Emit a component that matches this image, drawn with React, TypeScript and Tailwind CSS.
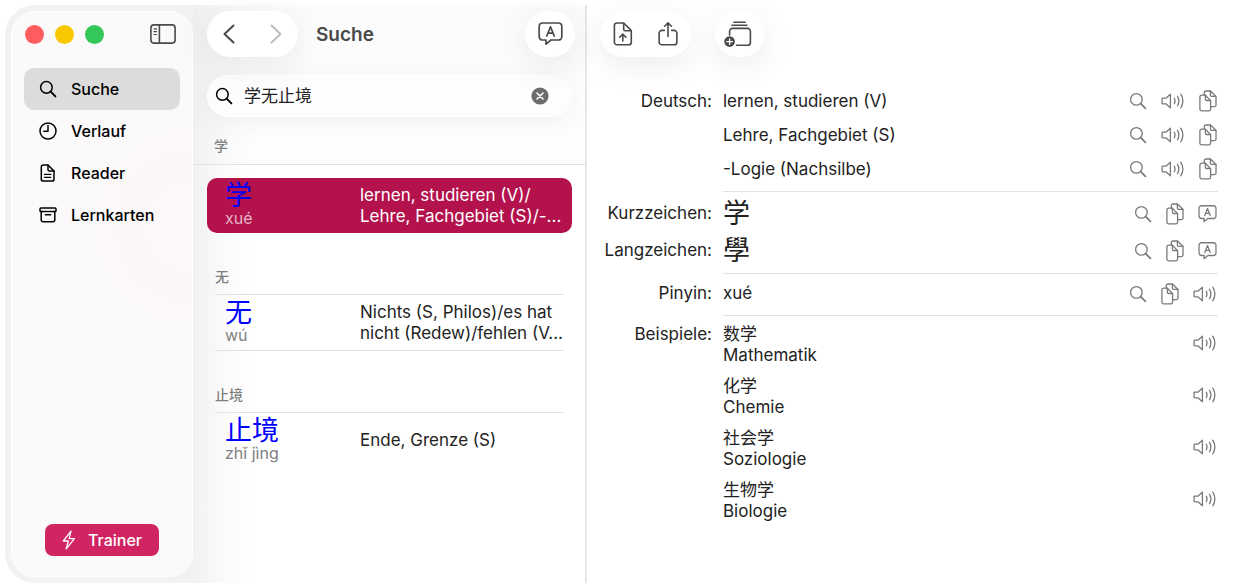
import { useState } from "react";
import type { ReactNode } from "react";

type IconProps = { className?: string };

function Svg({ w, h, sw, className, children }: { w: number; h: number; sw: number; className?: string; children: ReactNode }) {
  return (
    <svg
      width={w}
      height={h}
      viewBox={`0 0 ${w} ${h}`}
      fill="none"
      stroke="currentColor"
      strokeWidth={sw}
      strokeLinecap="round"
      strokeLinejoin="round"
      aria-hidden="true"
      className={className}
    >
      {children}
    </svg>
  );
}

function MagnifierIcon({ bold }: { bold?: boolean }) {
  return (
    <Svg w={18} h={18} sw={bold ? 1.5 : 1.3}>
      <circle cx="7.4" cy="7.4" r="5.8" />
      <path d="M11.7 11.7 16.400 16.400" strokeWidth={bold ? 1.9 : 1.7} />
    </Svg>
  );
}

function ClockIcon() {
  return (
    <Svg w={18} h={18} sw={1.5}>
      <circle cx="9" cy="9" r="8" />
      <path d="M9 3.6V9.2H4.8" />
    </Svg>
  );
}

function DocTextIcon() {
  return (
    <Svg w={18} h={18} sw={1.5}>
      <path d="M4.2 1H9l6 6v8.2a1.9 1.9 0 0 1-1.9 1.9H4.2a1.9 1.9 0 0 1-1.9-1.9V2.9A1.9 1.9 0 0 1 4.2 1Z" />
      <path d="M9 1.2v4.4A1.3 1.3 0 0 0 10.300 7H15" />
      <path d="M5.500 10.400h6.300M5.500 13.300h6.300" strokeWidth="1.300" />
    </Svg>
  );
}

function ArchiveIcon() {
  return (
    <Svg w={18} h={18} sw={1.5}>
      <rect x="1" y="2" width="16" height="3.600" rx="0.900" />
      <path d="M2.200 5.600v8.200a2 2 0 0 0 2 2h9.600a2 2 0 0 0 2-2V5.600M6.300 8.700h5.400" />
    </Svg>
  );
}

function BoltIcon() {
  return (
    <Svg w={14} h={20} sw={1.3}>
      <path d="M9 1.200 1.300 11h5L4.200 18.800 12.400 8.600H7.200Z" />
    </Svg>
  );
}

function SidebarIcon() {
  return (
    <Svg w={26} h={20} sw={1.6}>
      <rect x="0.900" y="0.900" width="24.200" height="18.200" rx="3" />
      <path d="M9.400 1v18" />
      <path d="M4 4.900h2.500M4 7.700h2.500M4 10.500h2.500" strokeWidth="1.200" />
    </Svg>
  );
}

function SpeakerIcon() {
  return (
    <Svg w={24} h={18} sw={1.3}>
      <path d="M1.700 6.200h3.200L9.400 2.200v13.600L4.900 11.800H1.700a.6.6 0 0 1-.6-.6V6.800a.6.6 0 0 1 .6-.6Z" />
      <path d="M13.300 6.300a5.800 5.800 0 0 1 0 5.400M16.500 4.300a9.400 9.400 0 0 1 0 9.400M19.800 2.200a13 13 0 0 1 0 13.600" />
    </Svg>
  );
}

function CopyIcon() {
  return (
    <Svg w={18} h={22} sw={1.3}>
      <path d="M2.600 5.200h3.800l5.200 5.400v8.500a1.700 1.700 0 0 1-1.700 1.700H2.600A1.700 1.700 0 0 1 .9 19.100V6.900a1.700 1.700 0 0 1 1.700-1.700Z" />
      <path d="M6.400 5.400v3.900a1.200 1.200 0 0 0 1.200 1.200h3.900" />
      <path d="M5.300 5V2.700A1.700 1.700 0 0 1 7 1h4.500L17 6.500v8.400a1.700 1.700 0 0 1-1.700 1.700h-3.500" />
      <path d="M11.400 1.100v4a1.300 1.300 0 0 0 1.300 1.300H17" />
    </Svg>
  );
}

function BubbleIcon({ large }: { large?: boolean }) {
  return (
    <svg
      width={large ? 25 : 19}
      height={large ? 24 : 18}
      viewBox="0 0 25 24"
      fill="none"
      stroke="currentColor"
      strokeWidth="1.700"
      strokeLinecap="round"
      strokeLinejoin="round"
      aria-hidden="true"
    >
      <path d="M4.400 1h16.200A3.200 3.200 0 0 1 23.800 4.200v10.600A3.200 3.200 0 0 1 20.600 18H13L8 22.200V18H4.400a3.200 3.200 0 0 1-3.200-3.200V4.200A3.200 3.200 0 0 1 4.400 1Z" />
      <path d="M8.800 14 12.500 4.800 16.200 14M10 11.200h5" />
    </svg>
  );
}

function DocUploadIcon() {
  return (
    <Svg w={20} h={24} sw={1.6}>
      <path d="M4 1h6.700l7.600 7.600v11.600a2.600 2.600 0 0 1-2.600 2.600H4a2.600 2.600 0 0 1-2.600-2.600V3.600A2.600 2.600 0 0 1 4 1Z" />
      <path d="M10.700 1.200v6a1.500 1.500 0 0 0 1.500 1.500h6" />
      <path d="M9.800 19v-6.500M6.600 15.200l3.200-3.100 3.200 3.100" />
    </Svg>
  );
}

function ShareIcon() {
  return (
    <Svg w={20} h={24} sw={1.6}>
      <path d="M6.300 8.400H4a2.900 2.900 0 0 0-2.900 2.900v8.600A2.900 2.900 0 0 0 4 22.800h12a2.900 2.900 0 0 0 2.900-2.900v-8.600A2.900 2.900 0 0 0 16 8.400h-2.300" />
      <path d="M10 14.500V1M6.600 4.200 10 .9l3.400 3.300" />
    </Svg>
  );
}

function StackAddIcon() {
  return (
    <Svg w={28} h={26} sw={1.6}>
      <path d="M9.800 1.300h11.400M8 4.300h15" strokeWidth="1.400" />
      <path d="M5.600 14V10.200A2.800 2.800 0 0 1 8.400 7.400h15.200a2.800 2.800 0 0 1 2.800 2.800v11.200a2.800 2.800 0 0 1-2.800 2.800H12.500" />
      <circle cx="5.600" cy="20.600" r="5.300" fill="currentColor" stroke="none" />
      <path d="M5.600 17.800v5.600M2.800 20.600h5.600" stroke="#fff" strokeWidth="1.300" />
    </Svg>
  );
}

function Chevron({ dir, className }: IconProps & { dir: "left" | "right" }) {
  return (
    <Svg w={12} h={20} sw={2} className={className}>
      <path d={dir === "left" ? "M10.500 1.500 1.500 10l9 8.500" : "M1.500 1.500 10.500 10l-9 8.500"} />
    </Svg>
  );
}

const navItems = [
  { label: "Suche", icon: <MagnifierIcon bold /> },
  { label: "Verlauf", icon: <ClockIcon /> },
  { label: "Reader", icon: <DocTextIcon /> },
  { label: "Lernkarten", icon: <ArchiveIcon /> },
];

const results = [
  { hanzi: "学", pinyin: "xué", lines: ["lernen, studieren (V)/", "Lehre, Fachgebiet (S)/-..."] },
  { hanzi: "无", pinyin: "wú", lines: ["Nichts (S, Philos)/es hat", "nicht (Redew)/fehlen (V..."] },
  { hanzi: "止境", pinyin: "zhǐ jìng", lines: ["Ende, Grenze (S)"] },
];

const examples = [
  ["数学", "Mathematik"],
  ["化学", "Chemie"],
  ["社会学", "Soziologie"],
  ["生物学", "Biologie"],
];

type Action = "search" | "speak" | "copy" | "strokes";

const actionInfo: Record<Action, { label: string; icon: ReactNode }> = {
  search: { label: "Suchen", icon: <MagnifierIcon /> },
  speak: { label: "Vorlesen", icon: <SpeakerIcon /> },
  copy: { label: "Kopieren", icon: <CopyIcon /> },
  strokes: { label: "Zeichen anzeigen", icon: <BubbleIcon /> },
};

function Actions({ items }: { items: Action[] }) {
  return (
    <div className="flex shrink-0 items-center gap-3.5 pr-px text-[#7a7a7a]">
      {items.map((a) => (
        <button key={a} type="button" aria-label={actionInfo[a].label}>
          {actionInfo[a].icon}
        </button>
      ))}
    </div>
  );
}

const pill = "flex h-[46px] items-center rounded-full bg-white text-[#4a4a4a] shadow-[0_8px_32px_rgba(0,0,0,0.08)]";

function Sidebar() {
  const [active, setActive] = useState("Suche");
  return (
    <aside className="m-1.5 mr-0 flex w-[182px] shrink-0 flex-col rounded-3xl border border-white bg-[#fafafa] bg-[radial-gradient(circle_at_100%_38%,rgba(255,244,247,0.5),transparent_60%)] px-3 pt-3 pb-5">
      <div className="flex items-center justify-between pr-1 pl-px">
        <div className="flex gap-[11px]">
          <button type="button" aria-label="Schließen" className="size-[19px] rounded-full bg-[#ff5c60]" />
          <button type="button" aria-label="Minimieren" className="size-[19px] rounded-full bg-[#fac800]" />
          <button type="button" aria-label="Vergrößern" className="size-[19px] rounded-full bg-[#34c759]" />
        </div>
        <button type="button" aria-label="Seitenleiste" className="text-[#4a4a4a]">
          <SidebarIcon />
        </button>
      </div>
      <nav className="mt-6 flex flex-col">
        {navItems.map((item) => (
          <button
            key={item.label}
            type="button"
            onClick={() => setActive(item.label)}
            className={`flex h-[42px] items-center gap-3.5 rounded-[10px] px-[15px] text-base font-medium text-black ${active === item.label ? "bg-[#dcdcdc]" : ""}`}
          >
            {item.icon}
            {item.label}
          </button>
        ))}
      </nav>
      <button
        type="button"
        className="mt-auto flex h-8 w-[114px] items-center justify-center gap-3 self-center rounded-lg bg-[#d12463] text-base font-medium text-white"
      >
        <BoltIcon />
        Trainer
      </button>
    </aside>
  );
}

function ResultsPane() {
  const [query, setQuery] = useState("学无止境");
  const [selected, setSelected] = useState(0);
  return (
    <section className="flex w-[394px] shrink-0 flex-col border-r-2 border-[#e8e8e8]">
      <div className="border-b border-[#e2e2e2] bg-linear-to-b from-black/[0.015] to-black/[0.005]">
        <header className="flex items-center pt-1.5 pr-2.5 pl-3.5">
          <div className={`${pill} w-[91px] justify-between px-4`}>
            <button type="button" aria-label="Zurück">
              <Chevron dir="left" />
            </button>
            <button type="button" aria-label="Vorwärts" className="text-[#bdbdbd]">
              <Chevron dir="right" />
            </button>
          </div>
          <h1 className="ml-[18px] pt-0.5 text-[19px] font-semibold text-[#4a4a4a]">Suche</h1>
          <button type="button" aria-label="Zeichen eingeben" className={`${pill} ml-auto w-[50px] justify-center`}>
            <BubbleIcon large />
          </button>
        </header>
        <div className="mt-[18px] mr-[13px] ml-3.5 flex h-[42px] items-center rounded-full border border-white bg-[#fdfdfd] pr-[22px] pl-[7px] shadow-[0_4px_24px_rgba(0,0,0,0.05)]">
          <label htmlFor="query" aria-label="Suchbegriff">
            <MagnifierIcon bold />
          </label>
          <input
            id="query"
            value={query}
            onChange={(e) => setQuery(e.target.value)}
            className="ml-[11px] min-w-0 flex-1 bg-transparent pt-0.5 text-[17px] text-[#222] outline-none"
          />
          <button type="button" aria-label="Löschen" onClick={() => setQuery("")}>
            <svg width="18" height="18" viewBox="0 0 18 18" aria-hidden="true">
              <circle cx="9" cy="9" r="8.600" fill="#6c6c6c" />
              <path d="M6 6l6 6M12 6l-6 6" stroke="#fff" strokeWidth="1.600" strokeLinecap="round" />
            </svg>
          </button>
        </div>
        <h2 className="mt-[19px] mb-2 pl-[21px] text-sm leading-5 font-medium text-[#808080]">学</h2>
      </div>
      <div className="pt-[13px] pr-[13px] pl-3.5">
        {results.map((r, i) => (
          <div key={r.hanzi}>
            {i > 0 && (
              <h2 className="mx-2 border-b border-[#e2e2e2] pt-[34px] pb-[7px] text-sm leading-5 font-medium text-[#808080]">{r.hanzi}</h2>
            )}
            <button
              type="button"
              onClick={() => setSelected(i)}
              className={`flex h-[55px] w-full items-center rounded-[10px] pl-[18px] text-left ${selected === i ? "bg-[#b3124d]" : ""}`}
            >
              <span className="flex w-[135px] shrink-0 flex-col">
                <span className="text-[27px] leading-6 text-[#0000ff]">{r.hanzi}</span>
                <span className={`text-base leading-5 ${selected === i ? "text-[#e8b3c6]" : "text-[#808080]"}`}>{r.pinyin}</span>
              </span>
              <span className={`flex flex-col text-[17px] leading-[21px] whitespace-nowrap ${selected === i ? "text-white" : "text-[#222]"}`}>
                {r.lines.map((l) => (
                  <span key={l}>{l}</span>
                ))}
              </span>
            </button>
            {i === 1 && <hr className="mx-2 border-[#e2e2e2]" />}
          </div>
        ))}
      </div>
    </section>
  );
}

function Field({ label, children, line, pad }: { label: string; children: ReactNode; line?: boolean; pad: string }) {
  return (
    <div className="flex gap-[11px]">
      <dt className={`w-[125px] shrink-0 text-right ${pad}`}>{label}</dt>
      <dd className={`min-w-0 flex-1 ${line ? "border-b border-[#e2e2e2]" : ""}`}>{children}</dd>
    </div>
  );
}

function DetailPane() {
  return (
    <main className="min-w-0 flex-1 pr-[22px]">
      <header className="flex gap-6 pt-1.5 pl-[13px]">
        <div className={`${pill} w-[91px] justify-between px-[13px]`}>
          <button type="button" aria-label="Datei exportieren">
            <DocUploadIcon />
          </button>
          <button type="button" aria-label="Teilen">
            <ShareIcon />
          </button>
        </div>
        <button type="button" aria-label="Lernkarte hinzufügen" className={`${pill} w-[50px] justify-center pr-1`}>
          <StackAddIcon />
        </button>
      </header>
      <dl className="mt-[27px] text-[17px] leading-[21px] text-[#222]">
        <Field label="Deutsch:" line pad="pt-[7px]">
          <div className="flex flex-col pb-[5px]">
            {["lernen, studieren (V)", "Lehre, Fachgebiet (S)", "-Logie (Nachsilbe)"].map((t) => (
              <div key={t} className="flex h-[34px] items-center justify-between">
                {t}
                <Actions items={["search", "speak", "copy"]} />
              </div>
            ))}
          </div>
        </Field>
        <Field label="Kurzzeichen:" pad="pt-[11px]">
          <div className="flex h-10 items-center justify-between pt-[3px]">
            <span className="text-[27px]">学</span>
            <Actions items={["search", "copy", "strokes"]} />
          </div>
        </Field>
        <Field label="Langzeichen:" line pad="pt-2">
          <div className="flex h-[41px] items-center justify-between pb-1">
            <span className="text-[27px]">學</span>
            <Actions items={["search", "copy", "strokes"]} />
          </div>
        </Field>
        <Field label="Pinyin:" line pad="pt-[9px]">
          <div className="flex h-[41px] items-center justify-between pb-0.5">
            xué
            <Actions items={["search", "copy", "speak"]} />
          </div>
        </Field>
        <Field label="Beispiele:" pad="pt-2">
          <ul className="flex flex-col gap-2.5 pt-2">
            {examples.map(([zh, de]) => (
              <li key={zh} className="flex items-center justify-between">
                <div>
                  <div>{zh}</div>
                  <div>{de}</div>
                </div>
                <div className="pb-1">
                  <Actions items={["speak"]} />
                </div>
              </li>
            ))}
          </ul>
        </Field>
      </dl>
    </main>
  );
}

export default function App() {
  return (
    <div className="flex min-h-screen bg-white py-[5px] pl-[5px] font-['Inter','Noto_Sans_CJK_SC',sans-serif]">
      <div className="flex min-w-0 flex-1 rounded-l-[30px] bg-[linear-gradient(to_right,#f2f2f2_188px,#fcfcfc_226px,#ffffff_250px)]">
        <Sidebar />
        <ResultsPane />
        <DetailPane />
      </div>
    </div>
  );
}
